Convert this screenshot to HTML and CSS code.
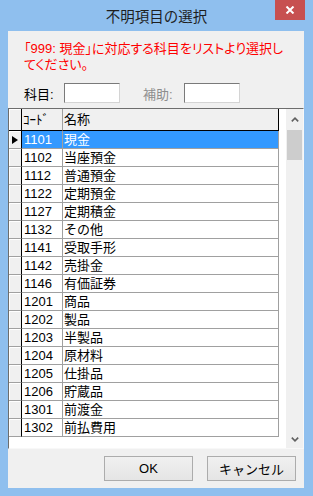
FILE: index.html
```html
<!DOCTYPE html>
<html lang="ja">
<head>
  <meta charset="UTF-8">
  <title>不明項目の選択</title>
  <meta name="viewport" content="width=device-width, initial-scale=1.0">
  <link rel="stylesheet" href="styles.css">
</head>
<body>
  <div class="window">
    <div class="titlebar">
      <span class="title">不明項目の選択</span>
      <button class="close" aria-label="閉じる">
        <svg width="10" height="8" viewBox="0 0 10 8"><path d="M1.5 0.5 L8.5 7.5 M8.5 0.5 L1.5 7.5" stroke="#fff" stroke-width="2"/></svg>
      </button>
    </div>

    <div class="client">
      <div class="top">
        <p class="msg">「999: 現金」に対応する科目をリストより選択し<br>てください。</p>
        <div class="fields">
          <label class="lbl">科目:</label>
          <input type="text" class="box">
          <label class="lbl off">補助:</label>
          <input type="text" class="box" disabled>
        </div>
      </div>

      <div class="grid">
        <div class="rows">
          <div class="row head">
            <div class="ind"></div>
            <div class="code">ｺｰﾄﾞ</div>
            <div class="name">名称</div>
          </div>
          <div class="row sel">
            <div class="ind"><span class="arrow"></span></div>
            <div class="code">1101</div>
            <div class="name">現金</div>
          </div>
          <div class="row"><div class="ind"></div><div class="code">1102</div><div class="name">当座預金</div></div>
          <div class="row"><div class="ind"></div><div class="code">1112</div><div class="name">普通預金</div></div>
          <div class="row"><div class="ind"></div><div class="code">1122</div><div class="name">定期預金</div></div>
          <div class="row"><div class="ind"></div><div class="code">1127</div><div class="name">定期積金</div></div>
          <div class="row"><div class="ind"></div><div class="code">1132</div><div class="name">その他</div></div>
          <div class="row"><div class="ind"></div><div class="code">1141</div><div class="name">受取手形</div></div>
          <div class="row"><div class="ind"></div><div class="code">1142</div><div class="name">売掛金</div></div>
          <div class="row"><div class="ind"></div><div class="code">1146</div><div class="name">有価証券</div></div>
          <div class="row"><div class="ind"></div><div class="code">1201</div><div class="name">商品</div></div>
          <div class="row"><div class="ind"></div><div class="code">1202</div><div class="name">製品</div></div>
          <div class="row"><div class="ind"></div><div class="code">1203</div><div class="name">半製品</div></div>
          <div class="row"><div class="ind"></div><div class="code">1204</div><div class="name">原材料</div></div>
          <div class="row"><div class="ind"></div><div class="code">1205</div><div class="name">仕掛品</div></div>
          <div class="row"><div class="ind"></div><div class="code">1206</div><div class="name">貯蔵品</div></div>
          <div class="row"><div class="ind"></div><div class="code">1301</div><div class="name">前渡金</div></div>
          <div class="row"><div class="ind"></div><div class="code">1302</div><div class="name">前払費用</div></div>
        </div>
        <div class="vscroll">
          <div class="sb-btn up">
            <svg width="8" height="5" viewBox="0 0 8 5"><polyline points="0.8,4.4 4,1.2 7.2,4.4" fill="none" stroke="#606060" stroke-width="1.6"/></svg>
          </div>
          <div class="thumb"></div>
          <div class="track"></div>
          <div class="sb-btn down">
            <svg width="8" height="5" viewBox="0 0 8 5"><polyline points="0.8,0.6 4,3.8 7.2,0.6" fill="none" stroke="#606060" stroke-width="1.6"/></svg>
          </div>
        </div>
      </div>

      <div class="footer">
        <button class="btn">OK</button>
        <button class="btn">キャンセル</button>
      </div>
    </div>
  </div>
</body>
</html>
```

FILE: styles.css
```css
body {
  margin: 0;
  padding: 0;
  font-family: "Liberation Sans", "Noto Sans CJK JP", sans-serif;
  font-size: 13px;
  color: #000;
}
.window {
  width: 313px;
  height: 496px;
  background: #8fbfee; /* window frame */
  display: flex;
  flex-direction: column;
}
.titlebar {
  height: 31px;
  position: relative;
  display: flex;
  justify-content: center;
  align-items: center;
}
.title {
  font-family: "Noto Sans CJK JP", sans-serif;
  font-size: 14.5px;
  color: #1e1e1e;
}
.close {
  position: absolute;
  top: 0;
  right: 8px;
  width: 30px;
  height: 20px;
  padding: 0;
  border: none;
  background: #c75050;
  display: flex;
  justify-content: center;
  align-items: center;
}
.client {
  flex: 1;
  margin: 0 9px 8px 8px;
  background: #f0f0f0;
  display: flex;
  flex-direction: column;
}

/* message + fields */
.top {
  height: 77px;
  box-sizing: border-box;
  padding: 10px 0 0 16px;
}
.msg {
  margin: 0;
  color: #f00;
  line-height: 16px;
  font-feature-settings: "palt";
  white-space: nowrap;
}
.fields {
  display: flex;
  align-items: center;
  height: 20px;
  margin-top: 10px;
}
.lbl {
  width: 40px;
}
.lbl.off {
  width: 41px;
  margin-left: 23px;
  color: #8d8d8d;
}
.box {
  width: 56px;
  height: 20px;
  box-sizing: border-box;
  margin: 0;
  padding: 0;
  border: 1px solid;
  border-color: #7a7a7a #d4d4d4 #d4d4d4 #7a7a7a;
  background: #fff;
}

/* data grid */
.grid {
  height: 341px;
  box-sizing: border-box;
  border: 1px solid;
  border-color: #6d6d6d #f8f8f8 #f8f8f8 #6d6d6d;
  background: #fff;
  display: flex;
}
.rows {
  flex: 1;
}
.row {
  display: flex;
  height: 18px;
  line-height: 17px;
}
.row > div {
  box-sizing: border-box;
  height: 18px;
  border-bottom: 1px solid #a0a0a0;
  white-space: nowrap;
}
.ind {
  width: 13px;
  background: #f0f0f0;
  border-right: 1px solid #000;
  box-shadow: inset 1px 1px #fff;
  display: flex;
  justify-content: center;
  align-items: center;
}
.code {
  width: 41px;
  padding-left: 2px;
  border-right: 1px solid #a0a0a0;
}
.name {
  width: 216px;
  padding-left: 1px;
  border-right: 1px solid #a0a0a0;
}
.row.head {
  height: 22px;
  line-height: 21px;
}
.row.head > div {
  height: 22px;
  background: #f0f0f0;
  border-bottom-color: #000;
}
.row.head .code {
  padding-left: 1px;
}
.row.head .name {
  border-right-color: #000;
}
.row.sel .code, .row.sel .name {
  background: #3399ff;
  color: #fff;
}
.arrow {
  width: 0;
  height: 0;
  border-left: 6px solid #000;
  border-top: 4px solid transparent;
  border-bottom: 4px solid transparent;
}

/* vertical scrollbar */
.vscroll {
  width: 17px;
  background: #f0f0f0;
  display: flex;
  flex-direction: column;
}
.sb-btn {
  display: flex;
  justify-content: center;
  align-items: center;
}
.sb-btn.up {
  height: 21px;
}
.sb-btn.down {
  height: 17px;
}
.thumb {
  height: 30px;
  margin: 0 1px;
  background: #cdcdcd;
}
.track {
  flex: 1;
}

/* buttons */
.footer {
  flex: 1;
  display: flex;
  justify-content: flex-end;
  align-items: flex-start;
  gap: 14px;
  padding: 7px 8px 0 0;
}
.btn {
  width: 89px;
  height: 25px;
  margin: 0;
  padding: 0;
  border: 1px solid #acacac;
  background: linear-gradient(#f0f0f0, #e5e5e5);
  font-family: "Liberation Sans", "Noto Sans CJK JP", sans-serif;
  font-size: 13px;
  color: #000;
}
```
